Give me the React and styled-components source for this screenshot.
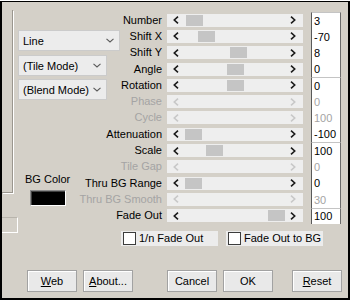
import React from 'react';
import styled, { createGlobalStyle } from 'styled-components';

const GlobalStyle = createGlobalStyle`
  html, body {
    margin: 0;
    padding: 0;
    background: #fff;
  }
  body {
    font-family: "Liberation Sans", Arial, sans-serif;
    font-size: 11px;
  }
`;

const Frame = styled.div`
  box-sizing: border-box;
  width: 350px;
  height: 299px;
  margin-top: 1px;
  background: #d4d0c8;
  border: 2px solid #000;
  border-top-width: 1px;
  display: flex;
  flex-direction: column;
  color: #000;
`;

const Grid = styled.div`
  display: grid;
  grid-template-columns: 14px 146px 5px 136px 8px 30px;
  grid-template-rows: repeat(13, 16.3px);
  margin-top: 10px;
`;

const EdgeCol = styled.div`
  grid-column: 1;
  grid-row: 1 / -1;
  align-self: start;
  margin-top: -2px;
  display: flex;
  flex-direction: column;
`;

const GroupEdge = styled.div`
  width: 10px;
  height: 182px;
  border-right: 1px solid #9a968e;
  border-bottom: 1px solid #9a968e;
  box-shadow: 1px 1px 0 #fff;
`;

const Stub = styled.div`
  box-sizing: border-box;
  width: 16px;
  height: 16px;
  margin-top: 24px;
  border-top: 1px solid #b8b4ac;
  border-right: 1px solid #fff;
  border-bottom: 1px solid #fff;
`;

const LeftBlock = styled.div`
  grid-column: 2;
  grid-row: 1 / -1;
  align-self: start;
  justify-self: start;
  padding-top: 18px;
  margin-left: 2px;
  display: flex;
  flex-direction: column;
  align-items: flex-start;
`;

const Combo = styled.div`
  box-sizing: border-box;
  width: ${p => p.$w}px;
  height: 21px;
  margin-top: ${p => p.$mt || 0}px;
  background: #ececec;
  border: 1px solid #cbcbcb;
  display: flex;
  align-items: center;
  justify-content: space-between;
  padding: 0 5px 0 4px;
`;

const BGBlock = styled.div`
  margin: 73px 0 0 7px;
  display: flex;
  flex-direction: column;
  align-items: center;
  gap: 4px;
  line-height: 13px;
`;

const Swatch = styled.div`
  box-sizing: border-box;
  width: 36px;
  height: 16px;
  background: #000;
  border: 1px solid;
  border-color: #8a8a8a #fff #fff #8a8a8a;
  box-shadow: inset 1px 1px 0 #404040;
`;

const Label = styled.div`
  grid-column: 2;
  grid-row: ${p => p.$row};
  justify-self: end;
  align-self: center;
  line-height: 13px;
  white-space: nowrap;
  color: ${p => (p.$disabled ? '#a4a4a4' : '#000')};
`;

const Track = styled.div`
  grid-column: 4;
  grid-row: ${p => p.$row};
  align-self: center;
  position: relative;
  box-sizing: border-box;
  height: 13px;
  background: #eeeeee;
  display: flex;
  align-items: center;
  justify-content: space-between;
  padding: 0 7px 0 6px;
  color: ${p => (p.$disabled ? '#c8c8c8' : '#1a1a1a')};
`;

const Thumb = styled.div`
  position: absolute;
  top: 1px;
  left: ${p => p.$pos}px;
  width: 17px;
  height: 11px;
  background: #c5c5c5;
`;

const ValueGroup = styled.div`
  grid-column: 6;
  grid-row: ${p => p.$rows};
  background: #fff;
  border-left: 1px solid #5a5a5a;
  border-right: 1px solid #6a6a6a;
  border-top: 1px solid #c4c4c4;
  display: flex;
  flex-direction: column;
`;

const Value = styled.div`
  flex: 1;
  padding-left: 2px;
  display: flex;
  align-items: center;
  color: ${p => (p.$disabled ? '#a4a4a4' : '#000')};
`;

const CheckRow = styled.div`
  display: flex;
  gap: 8px;
  margin: 7px 0 0 119px;
`;

const CheckItem = styled.label`
  box-sizing: border-box;
  width: 97px;
  height: 15px;
  background: #ececec;
  display: flex;
  align-items: center;
  gap: 3px;
  padding-left: 2px;
  white-space: nowrap;
`;

const CheckBox = styled.span`
  box-sizing: border-box;
  width: 13px;
  height: 13px;
  background: #fff;
  border: 1px solid #3c3c3c;
`;

const ButtonRow = styled.div`
  display: flex;
  margin: 24px 0 0 25px;
`;

const ButtonGroup = styled.div`
  display: flex;
  gap: 6px;
  margin-left: ${p => p.$offset || 0}px;
`;

const Button = styled.button`
  box-sizing: border-box;
  width: 50px;
  height: 22px;
  padding: 0;
  font-family: inherit;
  font-size: 11px;
  color: #000;
  background: #e9e9e9;
  border: 1px solid #a2a2a2;
  box-shadow: inset 1px 1px 0 #fff;
  u {
    text-decoration: underline;
  }
`;

const Chevron = () => (
  <svg width="8" height="5" viewBox="0 0 8 5">
    <path d="M0.5 0.8 L4 4 L7.5 0.8" fill="none" stroke="#5a5a5a" strokeWidth="1.1" />
  </svg>
);

const Arrow = ({ dir }) => (
  <svg width="6" height="8" viewBox="0 0 6 8">
    <path
      d={dir === 'left' ? 'M5 0.7 L1.3 4 L5 7.3' : 'M1 0.7 L4.7 4 L1 7.3'}
      fill="none"
      stroke="currentColor"
      strokeWidth="1.6"
    />
  </svg>
);

const rows = [
  { label: 'Number', value: '3', pos: 19 },
  { label: 'Shift X', value: '-70', pos: 31 },
  { label: 'Shift Y', value: '8', pos: 63 },
  { label: 'Angle', value: '0', pos: 60 },
  { label: 'Rotation', value: '0', pos: 60 },
  { label: 'Phase', value: '0', disabled: true },
  { label: 'Cycle', value: '100', disabled: true },
  { label: 'Attenuation', value: '-100', pos: 18 },
  { label: 'Scale', value: '100', pos: 39 },
  { label: 'Tile Gap', value: '0', disabled: true },
  { label: 'Thru BG Range', value: '0', pos: 18 },
  { label: 'Thru BG Smooth', value: '30', disabled: true },
  { label: 'Fade Out', value: '100', pos: 101 },
];

const groups = [[0, 4], [4, 8], [8, 12], [12, 13]];

export default function App() {
  return (
    <>
      <GlobalStyle />
      <Frame>
        <Grid>
          <EdgeCol>
            <GroupEdge />
            <Stub />
          </EdgeCol>

          <LeftBlock>
            <Combo $w={102}>
              <span>Line</span>
              <Chevron />
            </Combo>
            <Combo $w={89} $mt={4}>
              <span>(Tile Mode)</span>
              <Chevron />
            </Combo>
            <Combo $w={89} $mt={3}>
              <span>(Blend Mode)</span>
              <Chevron />
            </Combo>
            <BGBlock>
              <span>BG Color</span>
              <Swatch />
            </BGBlock>
          </LeftBlock>

          {rows.map((r, i) => (
            <React.Fragment key={r.label}>
              <Label $row={i + 1} $disabled={r.disabled}>{r.label}</Label>
              <Track $row={i + 1} $disabled={r.disabled}>
                <Arrow dir="left" />
                {!r.disabled && <Thumb $pos={r.pos} />}
                <Arrow dir="right" />
              </Track>
            </React.Fragment>
          ))}

          {groups.map(([a, b]) => (
            <ValueGroup key={a} $rows={`${a + 1} / ${b + 1}`}>
              {rows.slice(a, b).map(r => (
                <Value key={r.label} $disabled={r.disabled}>{r.value}</Value>
              ))}
            </ValueGroup>
          ))}
        </Grid>

        <CheckRow>
          <CheckItem>
            <CheckBox />
            1/n Fade Out
          </CheckItem>
          <CheckItem>
            <CheckBox />
            Fade Out to BG
          </CheckItem>
        </CheckRow>

        <ButtonRow>
          <ButtonGroup>
            <Button><u>W</u>eb</Button>
            <Button><u>A</u>bout...</Button>
          </ButtonGroup>
          <ButtonGroup $offset={34}>
            <Button>Cancel</Button>
            <Button>OK</Button>
          </ButtonGroup>
          <ButtonGroup $offset={19}>
            <Button><u>R</u>eset</Button>
          </ButtonGroup>
        </ButtonRow>
      </Frame>
    </>
  );
}
